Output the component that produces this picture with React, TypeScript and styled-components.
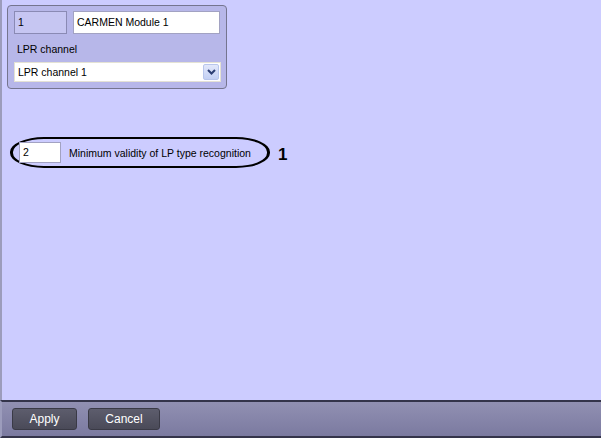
import styled, { createGlobalStyle } from "styled-components";

const GlobalStyle = createGlobalStyle`
  html, body {
    margin: 0;
    padding: 0;
    background: #ccccff;
  }
  * {
    box-sizing: border-box;
  }
`;

export default function App() {
  return (
    <>
      <GlobalStyle />
      <Screen>
        <Main>
          <Panel>
            <TopRow>
              <IdField>1</IdField>
              <NameField>CARMEN Module 1</NameField>
            </TopRow>
            <Label>LPR channel</Label>
            <Select>
              <SelectText>LPR channel 1</SelectText>
              <DropButton>
                <svg width="9" height="6" viewBox="0 0 9 6">
                  <path d="M1 1 L4.5 4.5 L8 1" stroke="#2c3e73" strokeWidth="2" fill="none" />
                </svg>
              </DropButton>
            </Select>
          </Panel>

          <CalloutRow>
            <Ellipse>
              <NumberField>2</NumberField>
              <FieldCaption>Minimum validity of LP type recognition</FieldCaption>
            </Ellipse>
            <Marker>1</Marker>
          </CalloutRow>
        </Main>
        <Footer>
          <Button $width={65}>Apply</Button>
          <Button $width={72}>Cancel</Button>
        </Footer>
      </Screen>
    </>
  );
}

const Screen = styled.div`
  width: 601px;
  height: 438px;
  display: flex;
  flex-direction: column;
  font-family: "Liberation Sans", Arial, sans-serif;
  font-size: 10.5px;
  color: #000;
  overflow: hidden;
`;

const Main = styled.div`
  flex: 1;
  background: #ccccff;
  border-left: 2px solid #9c9cbc;
  padding: 5px 0 0 5px;
  display: flex;
  flex-direction: column;
  align-items: flex-start;
`;

const Panel = styled.div`
  width: 220px;
  height: 84px;
  background: #b7b7e9;
  border: 1px solid #75758f;
  border-radius: 4px;
  padding: 5px 0 0 6px;
  display: flex;
  flex-direction: column;
`;

const TopRow = styled.div`
  display: flex;
  gap: 6px;
`;

const IdField = styled.div`
  width: 53px;
  height: 23px;
  background: #c6c6f2;
  border: 1px solid #8a8ab4;
  padding: 4px 0 0 3px;
`;

const NameField = styled.div`
  width: 147px;
  height: 23px;
  background: #fff;
  border: 1px solid #a2a2c2;
  padding: 4px 0 0 3px;
`;

const Label = styled.div`
  height: 28px;
  padding-top: 9px;
  padding-left: 3px;
`;

const Select = styled.div`
  width: 207px;
  height: 20px;
  background: #fff;
  border: 1px solid #e4e2d4;
  display: flex;
  align-items: center;
  justify-content: space-between;
  padding: 0 1px 0 3px;
`;

const SelectText = styled.span`
  line-height: 16px;
`;

const DropButton = styled.div`
  width: 16px;
  height: 16px;
  background: linear-gradient(#e2e8fb, #c3d0f4);
  border: 1px solid #b8c6ec;
  border-radius: 2px;
  display: flex;
  align-items: center;
  justify-content: center;
`;

const CalloutRow = styled.div`
  margin-top: 48px;
  margin-left: 3px;
  display: flex;
  align-items: center;
  gap: 8px;
`;

const Ellipse = styled.div`
  width: 260px;
  height: 31px;
  border: 2px solid #000;
  border-left-width: 3px;
  border-right-width: 3px;
  border-radius: 34px / 15px;
  display: flex;
  align-items: center;
  padding-left: 6px;
  gap: 8px;
`;

const NumberField = styled.div`
  width: 42px;
  height: 21px;
  background: #fff;
  border: 1px solid #a2a2c2;
  padding: 3px 0 0 3px;
`;

const FieldCaption = styled.span`
  font-size: 10.5px;
`;

const Marker = styled.span`
  font-size: 17px;
  font-weight: bold;
  padding-top: 4px;
`;

const Footer = styled.div`
  height: 38px;
  border-top: 2px solid #34344a;
  border-bottom: 2px solid #34344a;
  border-left: 2px solid #9c9cbc;
  background: linear-gradient(#9190b2, #7b7aa0);
  display: flex;
  align-items: center;
  gap: 11px;
  padding: 0 0 0 10px;
`;

const Button = styled.div<{ $width: number }>`
  width: ${(p) => p.$width}px;
  height: 22px;
  background: linear-gradient(#5d5d6d, #4a4a58);
  border: 1px solid #3a3a46;
  border-radius: 3px;
  color: #fff;
  font-size: 12px;
  display: flex;
  align-items: center;
  justify-content: center;
`;
